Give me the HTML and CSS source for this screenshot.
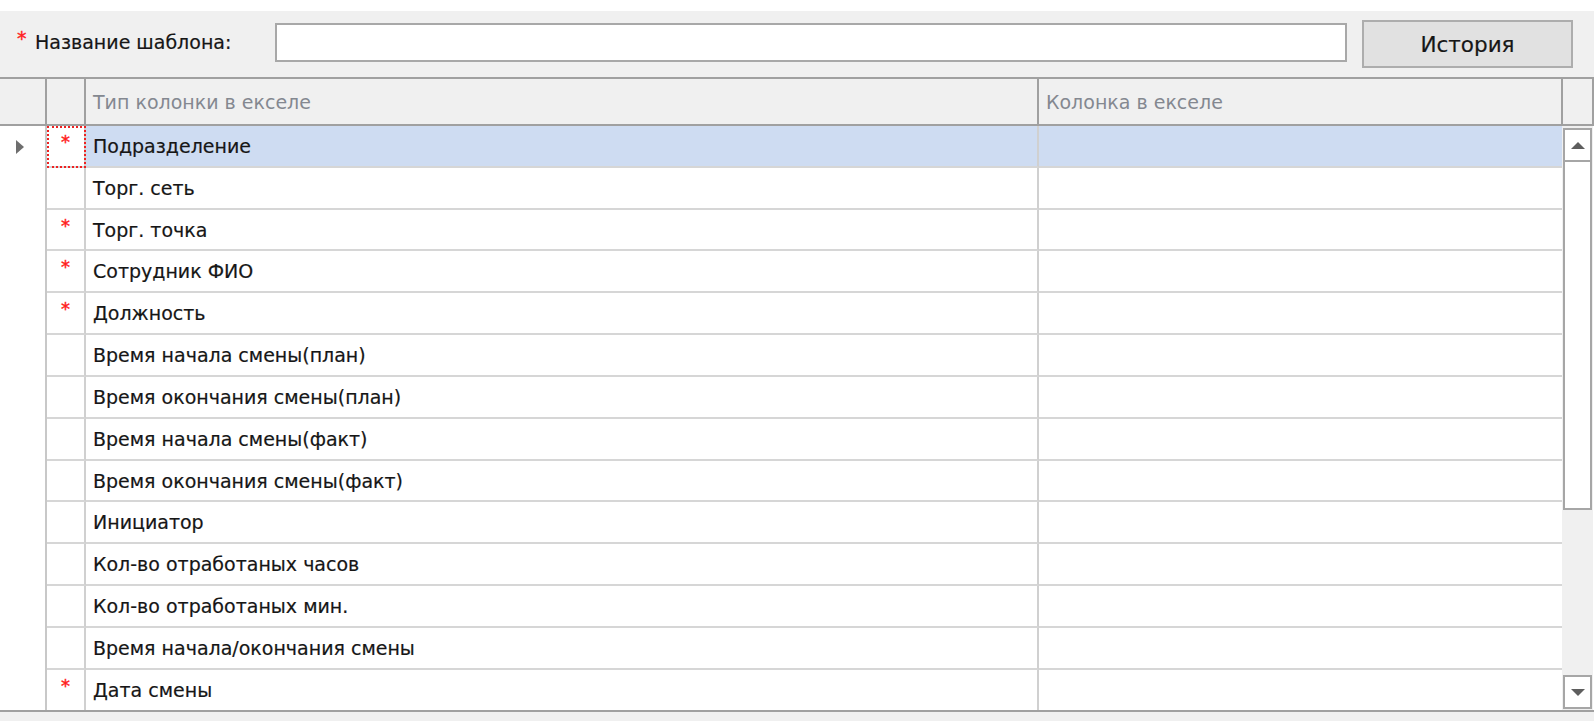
FILE: index.html
```html
<!DOCTYPE html>
<html lang="ru">
<head>
<meta charset="utf-8">
<title>Шаблон</title>
<link rel="stylesheet" href="styles.css">
</head>
<body>
<div class="panel">
  <div class="topbar">
    <div class="lbl"><span class="req">*</span>Название шаблона:</div>
    <div class="input"></div>
    <button class="btn">История</button>
  </div>
  <div class="grid">
    <div class="head">
      <div class="c0"></div>
      <div class="c1"></div>
      <div class="c2">Тип колонки в екселе</div>
      <div class="c3">Колонка в екселе</div>
      <div class="c4"></div>
    </div>
    <div class="body">
      <div class="rows">
        <div class="row sel"><div class="c0"><span class="arrow"></span></div><div class="c1 focus"><span class="star">*</span></div><div class="c2">Подразделение</div><div class="c3"></div></div>
        <div class="row"><div class="c0"></div><div class="c1"></div><div class="c2">Торг. сеть</div><div class="c3"></div></div>
        <div class="row"><div class="c0"></div><div class="c1"><span class="star">*</span></div><div class="c2">Торг. точка</div><div class="c3"></div></div>
        <div class="row"><div class="c0"></div><div class="c1"><span class="star">*</span></div><div class="c2">Сотрудник ФИО</div><div class="c3"></div></div>
        <div class="row"><div class="c0"></div><div class="c1"><span class="star">*</span></div><div class="c2">Должность</div><div class="c3"></div></div>
        <div class="row"><div class="c0"></div><div class="c1"></div><div class="c2">Время начала смены(план)</div><div class="c3"></div></div>
        <div class="row"><div class="c0"></div><div class="c1"></div><div class="c2">Время окончания смены(план)</div><div class="c3"></div></div>
        <div class="row"><div class="c0"></div><div class="c1"></div><div class="c2">Время начала смены(факт)</div><div class="c3"></div></div>
        <div class="row"><div class="c0"></div><div class="c1"></div><div class="c2">Время окончания смены(факт)</div><div class="c3"></div></div>
        <div class="row"><div class="c0"></div><div class="c1"></div><div class="c2">Инициатор</div><div class="c3"></div></div>
        <div class="row"><div class="c0"></div><div class="c1"></div><div class="c2">Кол-во отработаных часов</div><div class="c3"></div></div>
        <div class="row"><div class="c0"></div><div class="c1"></div><div class="c2">Кол-во отработаных мин.</div><div class="c3"></div></div>
        <div class="row"><div class="c0"></div><div class="c1"></div><div class="c2">Время начала/окончания смены</div><div class="c3"></div></div>
        <div class="row"><div class="c0"></div><div class="c1"><span class="star">*</span></div><div class="c2">Дата смены</div><div class="c3"></div></div>
      </div>
      <div class="scroll">
        <div class="sbtn"><span class="tri-up"></span></div>
        <div class="thumb"></div>
        <div class="track"></div>
        <div class="sbtn"><span class="tri-down"></span></div>
      </div>
    </div>
  </div>
</div>
</body>
</html>
```

FILE: styles.css
```css
html, body {
  margin: 0;
  padding: 0;
  background: #ffffff;
}
body {
  font-family: "DejaVu Sans", "Liberation Sans", sans-serif;
  font-size: 19px;
  color: #161616;
  padding-top: 11px;
  height: 721px;
  box-sizing: border-box;
  overflow: hidden;
}
.panel {
  width: 1594px;
  height: 710px;
  background: #f0f0f0;
  display: flex;
  flex-direction: column;
}
.topbar {
  height: 66px;
  flex: none;
  display: flex;
  align-items: center;
  box-sizing: border-box;
  padding-left: 16px;
}
.lbl {
  width: 259px;
  display: flex;
  align-items: center;
  font-size: 19px;
  margin-top: -4px;
  -webkit-text-stroke: 0.2px #161616;
}
.req {
  color: #ff2020;
  font-size: 19px;
  width: 19px;
  position: relative;
  top: -4px;
  left: 1px;
  -webkit-text-stroke: 0.4px #ff2020;
}
.input {
  width: 1072px;
  height: 39px;
  box-sizing: border-box;
  background: #ffffff;
  border: 2px solid #a8a8a8;
  margin-top: -4px;
}
.btn {
  margin-left: 15px;
  width: 211px;
  height: 48px;
  box-sizing: border-box;
  background: #e1e1e1;
  border: 2px solid #adadad;
  font-family: "DejaVu Sans", "Liberation Sans", sans-serif;
  font-size: 21.5px;
  color: #161616;
  padding: 0;
  -webkit-text-stroke: 0.2px #161616;
}
.grid {
  height: 635px;
  flex: none;
  border-top: 2px solid #a0a0a0;
  border-bottom: 2px solid #a0a0a0;
  background: #ffffff;
  display: flex;
  flex-direction: column;
  box-sizing: border-box;
}
.head {
  height: 45px;
  flex: none;
  display: flex;
  background: #f0f0f0;
  border-bottom: 2px solid #a0a0a0;
  color: #848890;
}
.head > div {
  border-right: 2px solid #a0a0a0;
  display: flex;
  align-items: center;
  box-sizing: border-box;
}
.c0 { width: 47px; flex: none; }
.c1 { width: 39px; flex: none; }
.c2 { width: 953px; flex: none; padding-left: 7px; }
.c3 { width: 523px; flex: none; padding-left: 7px; }
.head .c3 { width: 524px; }
.head .c4 { width: 31px; flex: none; }
.body {
  flex: 1;
  display: flex;
  min-height: 0;
}
.rows {
  width: 1562px;
  display: flex;
  flex-direction: column;
  overflow: hidden;
  -webkit-text-stroke: 0.2px #161616;
}
.row {
  flex: none;
  height: 41.83px;
  display: flex;
}
.row > div {
  box-sizing: border-box;
  display: flex;
  align-items: center;
}
.row .c0 {
  border-right: 2px solid #c8c8c8;
  justify-content: center;
  padding-right: 6px;
}
.row .c1, .row .c2 {
  border-right: 2px solid #d0d0d0;
  border-bottom: 2px solid #d6d6d6;
}
.row .c3 {
  border-bottom: 2px solid #d6d6d6;
}
.row .c1 {
  justify-content: center;
  align-items: flex-start;
  padding-top: 5px;
}
.row.sel .c2, .row.sel .c3 {
  background: #cedcf2;
}
.focus {
  outline: 2px dotted #ee2222;
  outline-offset: -2px;
}
.star {
  color: #ff2020;
  font-size: 18px;
  -webkit-text-stroke: 0.4px #ff2020;
}
.arrow {
  width: 0;
  height: 0;
  border-top: 7px solid transparent;
  border-bottom: 7px solid transparent;
  border-left: 8px solid #6e6e6e;
}
.scroll {
  width: 31px;
  flex: none;
  display: flex;
  flex-direction: column;
  background: #f0f0f0;
  padding: 2px 1px 1px 1px;
  box-sizing: border-box;
}
.sbtn {
  height: 34px;
  flex: none;
  box-sizing: border-box;
  border: 2px solid #a6a6a6;
  background: #ffffff;
  display: flex;
  align-items: center;
  justify-content: center;
}
.thumb {
  height: 348px;
  flex: none;
  box-sizing: border-box;
  border: 2px solid #a6a6a6;
  border-top: none;
  background: #ffffff;
}
.track {
  flex: 1;
}
.tri-up {
  width: 0;
  height: 0;
  border-left: 7px solid transparent;
  border-right: 7px solid transparent;
  border-bottom: 7px solid #5e5e5e;
}
.tri-down {
  width: 0;
  height: 0;
  border-left: 7px solid transparent;
  border-right: 7px solid transparent;
  border-top: 7px solid #5e5e5e;
}
```
